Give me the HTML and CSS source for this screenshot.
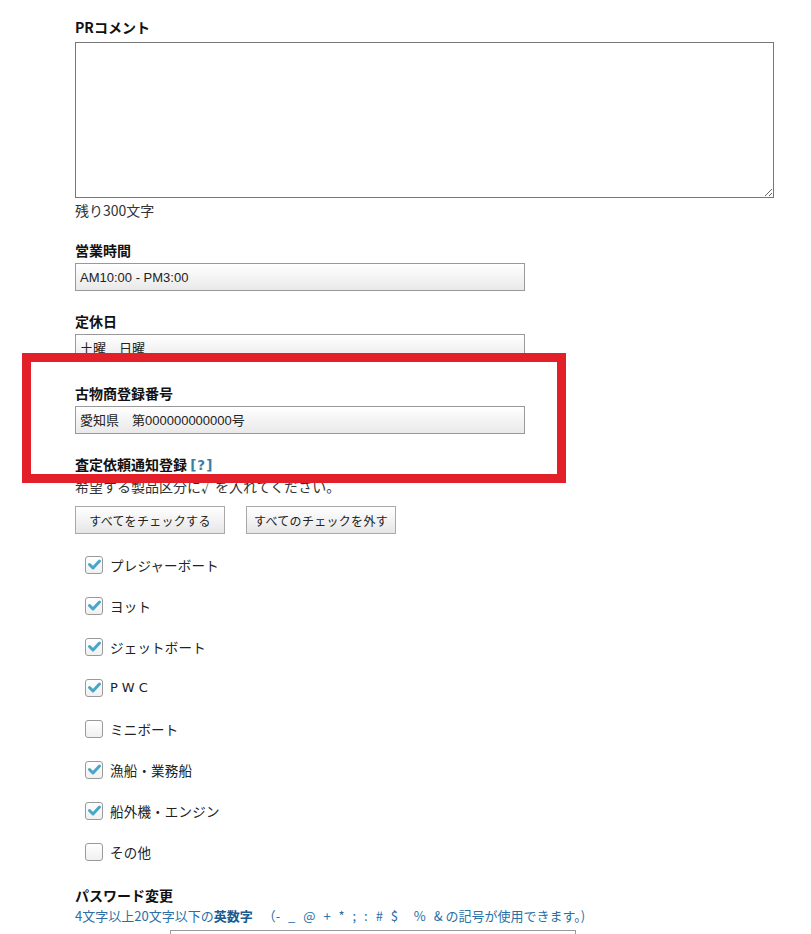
FILE: index.html
```html
<!DOCTYPE html>
<html lang="ja">
<head>
<meta charset="utf-8">
<title>フォーム</title>
<link rel="stylesheet" href="styles.css">
</head>
<body>
<div class="page">
  <div class="group first">
    <div class="label">PRコメント</div>
    <textarea class="textarea"></textarea>
    <div class="remain">残り300文字</div>
  </div>

  <div class="group">
    <div class="label">営業時間</div>
    <div class="input">AM10:00 ‐ PM3:00</div>
  </div>

  <div class="group">
    <div class="label">定休日</div>
    <div class="input">土曜　日曜</div>
  </div>

  <div class="group g-kobutsu">
    <div class="label">古物商登録番号</div>
    <div class="input">愛知県　第000000000000号</div>
  </div>

  <div class="group">
    <div class="label">査定依頼通知登録 <span class="help">[?]</span></div>
    <div class="note">希望する製品区分に√を入れてください。</div>
    <div class="buttons">
      <button class="btn" type="button">すべてをチェックする</button>
      <button class="btn" type="button">すべてのチェックを外す</button>
    </div>
    <ul class="checks">
      <li class="check"><span class="box"><svg viewBox="0 0 17 17" width="17" height="17"><path d="M3.5 8.5 L7 12 L13.5 5" fill="none" stroke="#47a6c9" stroke-width="3" stroke-linecap="round" stroke-linejoin="round"/></svg></span><span class="ctext">プレジャーボート</span></li>
      <li class="check"><span class="box"><svg viewBox="0 0 17 17" width="17" height="17"><path d="M3.5 8.5 L7 12 L13.5 5" fill="none" stroke="#47a6c9" stroke-width="3" stroke-linecap="round" stroke-linejoin="round"/></svg></span><span class="ctext">ヨット</span></li>
      <li class="check"><span class="box"><svg viewBox="0 0 17 17" width="17" height="17"><path d="M3.5 8.5 L7 12 L13.5 5" fill="none" stroke="#47a6c9" stroke-width="3" stroke-linecap="round" stroke-linejoin="round"/></svg></span><span class="ctext">ジェットボート</span></li>
      <li class="check"><span class="box"><svg viewBox="0 0 17 17" width="17" height="17"><path d="M3.5 8.5 L7 12 L13.5 5" fill="none" stroke="#47a6c9" stroke-width="3" stroke-linecap="round" stroke-linejoin="round"/></svg></span><span class="ctext wide">PWC</span></li>
      <li class="check"><span class="box"></span><span class="ctext">ミニボート</span></li>
      <li class="check"><span class="box"><svg viewBox="0 0 17 17" width="17" height="17"><path d="M3.5 8.5 L7 12 L13.5 5" fill="none" stroke="#47a6c9" stroke-width="3" stroke-linecap="round" stroke-linejoin="round"/></svg></span><span class="ctext">漁船・業務船</span></li>
      <li class="check"><span class="box"><svg viewBox="0 0 17 17" width="17" height="17"><path d="M3.5 8.5 L7 12 L13.5 5" fill="none" stroke="#47a6c9" stroke-width="3" stroke-linecap="round" stroke-linejoin="round"/></svg></span><span class="ctext">船外機・エンジン</span></li>
      <li class="check"><span class="box"></span><span class="ctext">その他</span></li>
    </ul>
  </div>

  <div class="group pw">
    <div class="label">パスワード変更</div>
    <div class="hint">4文字以上20文字以下の<b>英数字</b><span class="sym">（- _ @ + * ; : # $ &nbsp;% &amp;</span> の記号が使用できます。)</div>
    <div class="pwinput"></div>
  </div>

  <div class="highlight"></div>
</div>
</body>
</html>
```

FILE: styles.css
```css
html, body {
  margin: 0;
  padding: 0;
  background: #fff;
}
body {
  font-family: "Noto Sans CJK JP", "Noto Sans", sans-serif;
  font-size: 14px;
  color: #222;
  overflow: hidden;
  height: 934px;
}
.page {
  position: relative;
  padding: 17px 0 0 75px;
}
.group {
  margin-top: 20px;
}
.group.first {
  margin-top: 0;
}
.group.g-kobutsu {
  margin-top: 21px;
}
.label {
  font-weight: bold;
  font-size: 14px;
  line-height: 20px;
  height: 20px;
  margin-bottom: 3px;
  color: #111;
}
.first .label {
  margin-bottom: 5px;
}
.help {
  color: #3b7fa6;
  font-family: "DejaVu Sans", sans-serif;
  font-size: 13.5px;
  letter-spacing: 1px;
}
.textarea {
  display: block;
  box-sizing: border-box;
  width: 699px;
  height: 156px;
  margin: 0;
  border: 1px solid #777;
  resize: both;
  background: #fff;
}
.remain {
  margin-top: 2px;
  line-height: 20px;
  font-size: 14px;
  color: #333;
}
.input {
  box-sizing: border-box;
  width: 450px;
  height: 28px;
  border: 1px solid #999;
  background: linear-gradient(#ffffff, #f6f6f6 40%, #e9e9e9);
  padding: 1px 4px 0;
  line-height: 26px;
  font-family: "Liberation Sans", "Noto Sans CJK JP", sans-serif;
  font-size: 13px;
  color: #222;
  overflow: hidden;
}
.note {
  line-height: 20px;
  font-size: 14px;
  color: #333;
  margin-top: -1px;
}
.buttons {
  display: flex;
  gap: 21px;
  margin-top: 10px;
}
.btn {
  box-sizing: border-box;
  width: 150px;
  height: 28px;
  border: 1px solid #a9a9a9;
  border-radius: 0;
  background: linear-gradient(#ffffff, #f3f3f3 50%, #e6e6e6);
  font-family: "Noto Sans CJK JP", sans-serif;
  font-size: 12px;
  letter-spacing: 0.3px;
  color: #222;
  padding: 0;
  margin: 0;
}
.checks {
  list-style: none;
  margin: 10px 0 0 0;
  padding: 0 0 0 10px;
}
.check {
  height: 41px;
  display: flex;
  align-items: center;
  gap: 7px;
}
.box {
  box-sizing: border-box;
  width: 18px;
  height: 18px;
  border: 1px solid #9a9a9a;
  border-radius: 3px;
  background: linear-gradient(#ffffff, #f0f0f0);
  display: flex;
  align-items: center;
  justify-content: center;
  overflow: hidden;
}
.box svg {
  flex: none;
}
.ctext {
  font-size: 13.5px;
  letter-spacing: 0.2px;
  color: #222;
  line-height: 20px;
}
.ctext.wide {
  letter-spacing: 4px;
  font-family: "DejaVu Sans", sans-serif;
  font-size: 13px;
}
.pw {
  margin-top: 13px;
}
.pw .label {
  margin-bottom: 1px;
}
.hint {
  color: #2a6fa6;
  font-size: 13px;
  line-height: 20px;
  white-space: nowrap;
}
.hint b {
  color: #1a5a8e;
  margin-right: 10px;
}
.sym {
  word-spacing: 5px;
}
.pwinput {
  margin-top: 4px;
  margin-left: 95px;
  width: 404px;
  height: 28px;
  border: 1px solid #999;
  border-bottom: none;
}
.highlight {
  position: absolute;
  left: 22px;
  top: 353px;
  width: 526px;
  height: 112px;
  border: 9px solid #e3202a;
  pointer-events: none;
}
```
